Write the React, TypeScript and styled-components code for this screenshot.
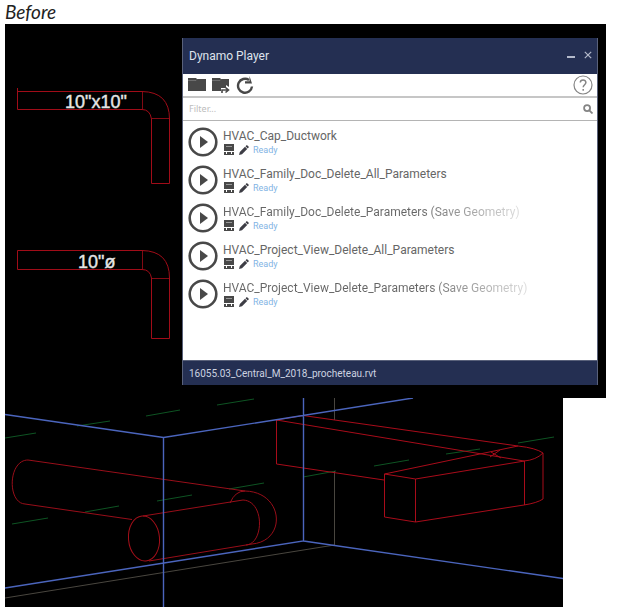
import React from "react";
import styled, { createGlobalStyle } from "styled-components";

const GlobalStyle = createGlobalStyle`
  *, *::before, *::after { box-sizing: border-box; }
  body { margin: 0; background: #fff; }
`;

const Page = styled.main`
  padding: 0 14px 4px 5px;
  font-family: Roboto, "Noto Sans", sans-serif;
`;

const Caption = styled.h1`
  margin: 0;
  padding-top: 2px;
  height: 24px;
  font: italic 400 19px/20px Lato, sans-serif;
  color: #222;
`;

const PlanView = styled.section`
  display: flex;
  align-items: flex-start;
  background: #000;
  padding: 14px 8px 13px 0;
`;

const PlanDrawing = styled.svg`
  display: block;
  flex: none;
  width: 177px;
  height: 340px;
  fill: none;
  stroke: #a00c18;
  text {
    fill: #e6e6e6;
    stroke: #e6e6e6;
    stroke-width: 0.4px;
    font: 400 18px "Liberation Sans", sans-serif;
  }
`;

const Player = styled.section`
  flex: 1;
  min-width: 0;
  display: flex;
  flex-direction: column;
  background: #fff;
  border: 1px solid #59617a;
  border-width: 0 1px;
`;

const TitleBar = styled.header`
  display: flex;
  align-items: center;
  height: 36px;
  padding: 0 5px 0 6px;
  background: #242f52;
`;

const WindowTitle = styled.h2`
  flex: 1;
  margin: 0;
  font-size: 12px;
  line-height: 16px;
  font-weight: 400;
  color: #dfe3ec;
`;

const IconButton = styled.button<{ $tone?: string }>`
  display: flex;
  align-items: center;
  justify-content: center;
  flex: none;
  padding: 0;
  border: 0;
  background: none;
  color: ${(p) => p.$tone ?? "#484848"};
  svg { display: block; }
`;

const WindowButtons = styled.div`
  display: flex;
  gap: 8px;
`;

const Toolbar = styled.div`
  display: flex;
  align-items: center;
  gap: 5px;
  height: 24px;
  padding: 0 4px 0 5px;
  border-bottom: 2px solid #c6c6c6;
`;

const Spacer = styled.span`
  flex: 1;
`;

const FilterBar = styled.label`
  display: flex;
  align-items: center;
  height: 23px;
  padding: 0 4px 0 6px;
  border-bottom: 1px solid #b4b4b4;
  color: #858585;
`;

const FilterInput = styled.input`
  flex: 1;
  min-width: 0;
  padding: 0;
  border: 0;
  outline: 0;
  background: none;
  font: 9px/16px "Noto Sans", sans-serif;
  color: #555;
  &::placeholder { color: #bdbdbd; opacity: 1; }
`;

const ScriptList = styled.ul`
  list-style: none;
  margin: 0;
  padding: 2px 5px 47px;
`;

const ScriptRow = styled.li`
  display: flex;
  align-items: center;
  gap: 5px;
  height: 38px;
`;

const ScriptInfo = styled.div`
  min-width: 0;
`;

const ScriptName = styled.div<{ $fade?: boolean }>`
  font-size: 12px;
  line-height: 16px;
  white-space: nowrap;
  color: #666;
  ${(p) =>
    p.$fade &&
    `
    color: transparent;
    background: linear-gradient(90deg, #666 65%, #ddd 100%);
    background-clip: text;
  `}
`;

const ScriptMeta = styled.div`
  display: flex;
  align-items: center;
  gap: 4px;
  height: 12px;
`;

const Status = styled.span`
  font-size: 9px;
  line-height: 12px;
  color: #82b4e4;
`;

const StatusBar = styled.footer`
  height: 25px;
  padding: 0 6px;
  border-top: 1px solid #59617a;
  background: #242f52;
  font-size: 10px;
  line-height: 25px;
  color: #ccd2e0;
`;

const ModelView = styled.section`
  margin-right: 43px;
  background: #000;
`;

const ModelDrawing = styled.svg`
  display: block;
  width: 100%;
  height: auto;
  fill: none;
`;

const scripts = [
  { name: "HVAC_Cap_Ductwork" },
  { name: "HVAC_Family_Doc_Delete_All_Parameters" },
  { name: "HVAC_Family_Doc_Delete_Parameters (Save Geometry)", fade: true },
  { name: "HVAC_Project_View_Delete_All_Parameters" },
  { name: "HVAC_Project_View_Delete_Parameters (Save Geometry)", fade: true },
];

const PlayIcon = () => (
  <svg width="30" height="30" viewBox="0 0 30 30">
    <circle cx="15" cy="15" r="13.3" fill="none" stroke="currentColor" strokeWidth="2.6" />
    <path d="M12 9v12l8-6z" fill="currentColor" />
  </svg>
);

const FolderIcon = () => (
  <svg width="19" height="16" viewBox="0 0 19 16" fill="currentColor">
    <path d="M0 1h8l1 1h9v12H0z" />
    <path d="M0 3.500h8l1-1" fill="none" stroke="#888" strokeWidth=".6" />
  </svg>
);

const FolderArrowIcon = () => (
  <svg width="19" height="18" viewBox="0 0 19 18" fill="currentColor">
    <path d="M0 2h8l1 1h8v8l-3-2v3h-5v3H0z" />
    <path d="M0 4.500h8l1-1" fill="none" stroke="#888" strokeWidth=".6" />
    <path d="M10 17v-3h6M13.5 11.5l3 2.5-3 2.5" fill="none" stroke="currentColor" strokeWidth="1.6" />
  </svg>
);

const RefreshIcon = () => (
  <svg width="18" height="20" viewBox="0 0 18 20">
    <path d="M13 5A7 7 0 1 0 16 11.500" fill="none" stroke="currentColor" strokeWidth="2.400" />
    <path d="M13.500 1 16 8.500H9V6.300h4.500z" fill="currentColor" />
  </svg>
);

const HelpIcon = () => (
  <svg width="20" height="20" viewBox="0 0 20 20" fill="none" stroke="currentColor">
    <circle cx="10" cy="10" r="9" strokeWidth="1.2" />
    <path d="M7.3 7.6c0-3.6 5.6-3.6 5.6 0 0 2.1-2.7 2.3-2.7 4.7M10.2 14v1.7" strokeWidth="1.5" />
  </svg>
);

const SearchIcon = () => (
  <svg width="10" height="10" viewBox="0 0 10 10" fill="none" stroke="currentColor" strokeWidth="1.8">
    <circle cx="4.1" cy="4.1" r="3" />
    <path d="m6.3 6.3 3.2 3.2" />
  </svg>
);

const InputsIcon = () => (
  <svg width="12" height="12" viewBox="0 0 12 12" fill="#484848">
    <path d="M1 0h10v7H1zM1 8h2v3H1zM4 8h4v2H4zM9 8h2v3H9zM1 10h10v1H1z" />
    <path d="M3 2.500h6" stroke="#999" />
  </svg>
);

const PencilIcon = () => (
  <svg width="10" height="10" viewBox="0 0 10 10" fill="#3d3d45">
    <path d="M0 10 .8 7 6 1.8l2.2 2.2L3 9.2zM6.500 1.300 7.9 0 10 2.1 8.700 3.500z" />
  </svg>
);

export default function App() {
  return (
    <>
      <GlobalStyle />
      <Page>
        <Caption>Before</Caption>
        <PlanView>
          <PlanDrawing viewBox="5 38 177 340" role="img" aria-label="Duct plan">
            <path d="M17.5 91.5H142Q169.500 92 169.500 119V183.500H151.500V119Q150 109.500 142 109.500H17.500ZM17.500 88V92" />
            <path d="M142.500 91.500V109.500M151.500 118.500H169.500" opacity=".8" />
            <path d="M17.500 250.500H142Q169.500 251 169.500 278V338.500H151.500V278Q150 269.500 142 269.500H17.500Z" />
            <path d="M142.500 250.500V269.500M151.500 278.500H169.500" opacity=".8" />
            <text x="65" y="108">10"x10"</text>
            <text x="78" y="268">10"ø</text>
          </PlanDrawing>
          <Player>
            <TitleBar>
              <WindowTitle>Dynamo Player</WindowTitle>
              <WindowButtons>
                <IconButton $tone="#b4bacb" aria-label="Minimize">
                  <svg width="10" height="10"><path d="M1 6h8" stroke="currentColor" strokeWidth="2" /></svg>
                </IconButton>
                <IconButton $tone="#b4bacb" aria-label="Close">
                  <svg width="8" height="10"><path d="m.8.8 6.400 6.400M7.200.8.8 7.200" stroke="currentColor" strokeWidth="1.200" /></svg>
                </IconButton>
              </WindowButtons>
            </TitleBar>
            <Toolbar>
              <IconButton aria-label="Open folder"><FolderIcon /></IconButton>
              <IconButton aria-label="Change folder"><FolderArrowIcon /></IconButton>
              <IconButton aria-label="Refresh"><RefreshIcon /></IconButton>
              <Spacer />
              <IconButton $tone="#858585" aria-label="Help"><HelpIcon /></IconButton>
            </Toolbar>
            <FilterBar>
              <FilterInput aria-label="Filter" placeholder="Filter..." />
              <SearchIcon />
            </FilterBar>
            <ScriptList>
              {scripts.map((s) => (
                <ScriptRow key={s.name}>
                  <IconButton aria-label={`Run ${s.name}`}><PlayIcon /></IconButton>
                  <ScriptInfo>
                    <ScriptName $fade={s.fade}>{s.name}</ScriptName>
                    <ScriptMeta>
                      <IconButton aria-label="Edit inputs"><InputsIcon /></IconButton>
                      <IconButton aria-label="Edit script"><PencilIcon /></IconButton>
                      <Status>Ready</Status>
                    </ScriptMeta>
                  </ScriptInfo>
                </ScriptRow>
              ))}
            </ScriptList>
            <StatusBar>16055.03_Central_M_2018_procheteau.rvt</StatusBar>
          </Player>
        </PlanView>
        <ModelView>
          <ModelDrawing viewBox="5 398 558 209" role="img" aria-label="Duct 3D view">
            <path
              stroke="#0e5423"
              d="M5 438 36 433M77 426 110 421M146 416 180 410M217 405 254 399M12 524 48 518M85 512 119 506M157 501 192 495M229 489 264 483M303 477 336 471M374 466 409 460M446 454 480 449M518 443 554 437"
            />
            <path stroke="#49463f" d="M334.500 398V420M334.500 471V545L5 598" />
            <path stroke="#980e19" d="M28 460 245 491M25 504 132 519.500M28 460C8 460 7 503 25 504M143 516 243 500M149 561 252 544" />
            <ellipse stroke="#a30f19" cx="144" cy="538.500" rx="15.500" ry="22.500" transform="rotate(-5 144 538.500)" />
            <path stroke="#980e19" d="M230 503Q235 491 245 491C284 492 287 541 252 544M243 500C265 501 264 544 246 545" />
            <path
              stroke="#a80c1a"
              d="M276.500 464V420L303 415.500 518 446Q536 448 543 453V499Q537 503 524 505L415.500 522 384.500 517V474L518 446M276.500 464 384 480M276.500 420 494 456 524 461Q536 460 543 453M384.500 474 415.500 479 524.500 461V505M415.500 479V522M491 452 501 458M500 450 490 457"
            />
            <path stroke="#4b65bd" strokeWidth="1.400" d="M5 414.500 163.500 437.500 413 398M163.500 437.500V607M303.500 398V541L5 588M303.500 541 563 578.500" />
          </ModelDrawing>
        </ModelView>
      </Page>
    </>
  );
}
